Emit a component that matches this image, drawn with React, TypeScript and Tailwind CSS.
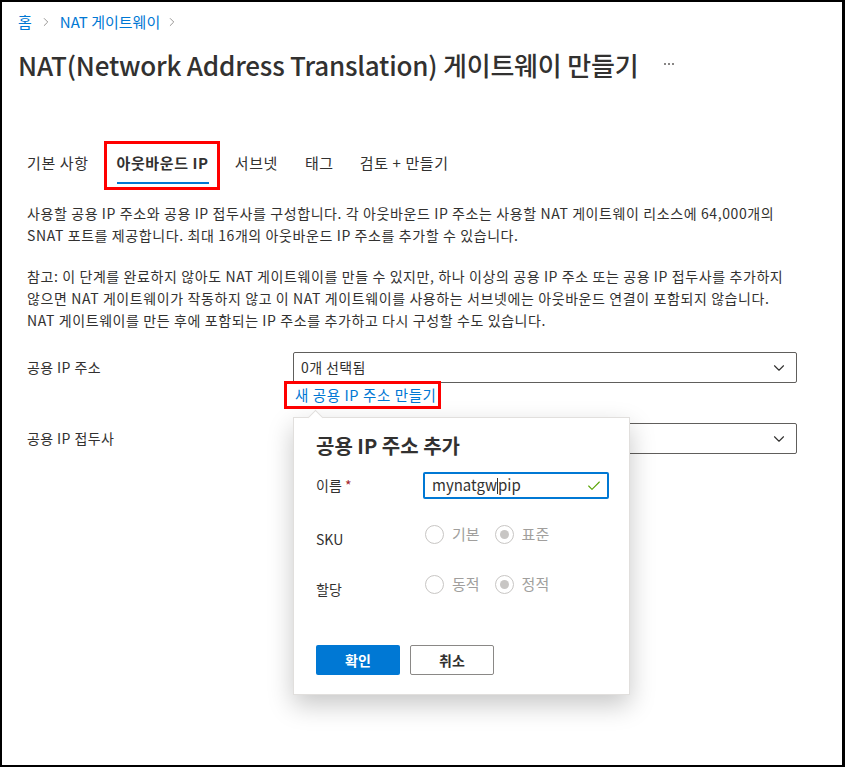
import { ChevronDown, ChevronRight, Check } from 'lucide-react';

const font = { fontFamily: '"Noto Sans CJK KR", "Noto Sans", sans-serif' };

function Radio({ label, checked }: { label: string; checked?: boolean }) {
  return (
    <div className="flex items-center gap-[8px]">
      <span className="w-[19px] h-[19px] rounded-full border border-[#c8c6c4] flex items-center justify-center">
        {checked && <span className="w-[9px] h-[9px] rounded-full bg-[#c8c6c4]" />}
      </span>
      <span className="text-[15px] text-[#a19f9d]">{label}</span>
    </div>
  );
}

function SelectBox({ value }: { value: string }) {
  return (
    <div className="w-[504px] h-[31px] border border-[#605e5c] rounded-[2px] flex items-center justify-between pl-[7px] pr-[8px] text-[14px] text-[#323130]">
      <span className="tracking-[0.4px]">{value}</span>
      <ChevronDown className="w-[18px] h-[18px] text-[#323130]" strokeWidth={1.5} />
    </div>
  );
}

export default function App() {
  return (
    <div
      style={font}
      className="relative w-[845px] h-[767px] bg-white border-2 border-r-[3px] border-black overflow-hidden text-[#323130]"
    >
      {/* breadcrumb */}
      <div className="flex items-center pl-[16px] pt-[10px] h-[30px] text-[15px] text-[#0078d4]">
        <span>홈</span>
        <ChevronRight className="w-[14px] h-[14px] text-[#8a8886] mx-[7px]" strokeWidth={1.5} />
        <span>NAT 게이트웨이</span>
        <ChevronRight className="w-[14px] h-[14px] text-[#8a8886] mx-[5px]" strokeWidth={1.5} />
      </div>

      {/* title */}
      <div className="flex items-center pl-[16px] mt-[16px] h-[34px]">
        <h1 className="text-[26px] leading-[34px] font-medium tracking-[-0.2px]">
          NAT(Network Address Translation) 게이트웨이 만들기
        </h1>
        <span className="ml-[26px] flex items-center gap-[2px] -mt-[2px]">
          <span className="w-[2px] h-[2px] rounded-full bg-[#605e5c]" />
          <span className="w-[2px] h-[2px] rounded-full bg-[#605e5c]" />
          <span className="w-[2px] h-[2px] rounded-full bg-[#605e5c]" />
        </span>
      </div>

      {/* tabs */}
      <div className="flex items-start mt-[59px] pl-[25px] text-[15px] tracking-[0.6px]">
        <span className="mt-[12px] leading-[20px]">기본 사항</span>
        <div className="ml-[15px] border-[3px] border-[#ff0000] pl-[10px] pr-[8px] pt-[9px] pb-[3px]">
          <div className="font-bold leading-[20px] whitespace-nowrap">아웃바운드 IP</div>
          <div className="mt-[9px] h-[2px] bg-[#0078d4]" />
        </div>
        <span className="ml-[15px] mt-[12px] leading-[20px]">서브넷</span>
        <span className="ml-[27px] mt-[12px] leading-[20px]">태그</span>
        <span className="ml-[26px] mt-[12px] leading-[20px]">검토 + 만들기</span>
      </div>

      {/* description */}
      <div className="pl-[25px] mt-[12px] text-[14px] leading-[22px] tracking-[0.6px]">
        <p>
          사용할 공용 IP 주소와 공용 IP 접두사를 구성합니다. 각 아웃바운드 IP 주소는 사용할 NAT 게이트웨이 리소스에 64,000개의
          <br />
          SNAT 포트를 제공합니다. 최대 16개의 아웃바운드 IP 주소를 추가할 수 있습니다.
        </p>
        <p className="mt-[19px]">
          참고: 이 단계를 완료하지 않아도 NAT 게이트웨이를 만들 수 있지만, 하나 이상의 공용 IP 주소 또는 공용 IP 접두사를 추가하지
          <br />
          않으면 NAT 게이트웨이가 작동하지 않고 이 NAT 게이트웨이를 사용하는 서브넷에는 아웃바운드 연결이 포함되지 않습니다.
          <br />
          NAT 게이트웨이를 만든 후에 포함되는 IP 주소를 추가하고 다시 구성할 수도 있습니다.
        </p>
      </div>

      {/* form */}
      <div className="relative mt-[21px] text-[14px]">
        <div className="flex items-center">
          <span className="w-[291px] pl-[25px] tracking-[0.4px]">공용 IP 주소</span>
          <SelectBox value="0개 선택됨" />
        </div>
        <div className="relative ml-[291px] h-[40px]">
          <span className="absolute left-[-9px] top-[-2px] w-[157px] h-[28px] border-[3px] border-[#ff0000]" />
          <span className="absolute left-[2px] top-[2px] text-[#0078d4] leading-[20px] text-[14.5px] tracking-[0.6px]">새 공용 IP 주소 만들기</span>
        </div>
        <div className="flex items-center">
          <span className="w-[291px] pl-[25px] tracking-[0.4px]">공용 IP 접두사</span>
          <SelectBox value="" />
        </div>

        {/* popover */}
        <div className="absolute left-[291px] top-[65px] w-[337px] h-[278px] bg-white border border-[#e1dfdd] shadow-[0_10px_24px_rgba(0,0,0,0.22)]">
          <span className="absolute left-[16px] top-[-6px] w-[11px] h-[11px] bg-white rotate-45 border-l border-t border-[#e1dfdd]" />
          <div className="pl-[22px] pt-[14px] text-[20px] font-bold leading-[28px]">공용 IP 주소 추가</div>

          <div className="flex items-center mt-[12px] pl-[22px]">
            <span className="w-[107px]">
              이름 <span className="text-[#a4262c]">*</span>
            </span>
            <div className="w-[186px] h-[27px] border-2 border-[#0078d4] rounded-[2px] flex items-center justify-between pl-[7px] pr-[5px] text-[15px]">
              <span className="flex items-center">
                mynatgw
                <span className="inline-block w-[1px] h-[16px] bg-[#323130]" />
                pip
              </span>
              <Check className="w-[16px] h-[16px] text-[#57a300]" strokeWidth={1.6} />
            </div>
          </div>

          <div className="flex items-center mt-[20px] pl-[22px]">
            <span className="w-[109px] mt-[10px]">SKU</span>
            <div className="flex items-center gap-[15px]">
              <Radio label="기본" />
              <Radio label="표준" checked />
            </div>
          </div>

          <div className="flex items-center mt-[19px] pl-[22px]">
            <span className="w-[109px] mt-[10px]">할당</span>
            <div className="flex items-center gap-[15px]">
              <Radio label="동적" />
              <Radio label="정적" checked />
            </div>
          </div>

          <div className="flex items-center gap-[10px] mt-[45px] pl-[22px]">
            <button className="w-[84px] h-[30px] bg-[#0078d4] rounded-[2px] text-white font-bold text-[14px]">확인</button>
            <button className="w-[84px] h-[30px] border border-[#8a8886] rounded-[2px] bg-white font-bold text-[14px]">취소</button>
          </div>
        </div>
      </div>
    </div>
  );
}
